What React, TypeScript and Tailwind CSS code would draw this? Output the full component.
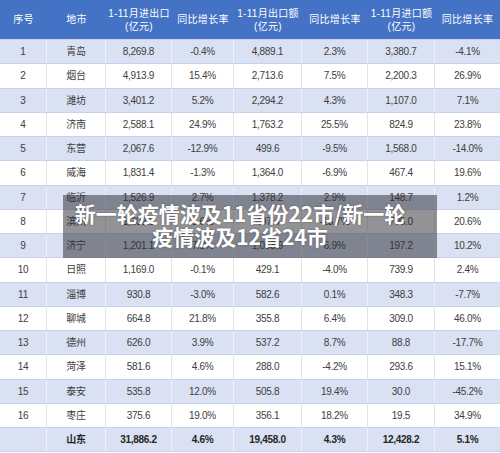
import React from "react";

type Row = [string, string, string, string, string, string, string, string];

const rows: Row[] = [
  ["1", "青岛", "8,269.8", "-0.4%", "4,889.1", "2.3%", "3,380.7", "-4.1%"],
  ["2", "烟台", "4,913.9", "15.4%", "2,713.6", "7.5%", "2,200.3", "26.9%"],
  ["3", "潍坊", "3,401.2", "5.2%", "2,294.2", "4.3%", "1,107.0", "7.1%"],
  ["4", "济南", "2,588.1", "24.9%", "1,763.2", "25.5%", "824.9", "23.8%"],
  ["5", "东营", "2,067.6", "-12.9%", "499.6", "-9.5%", "1,568.0", "-14.0%"],
  ["6", "威海", "1,831.4", "-1.3%", "1,364.0", "-6.9%", "467.4", "19.6%"],
  ["7", "临沂", "1,526.9", "2.7%", "1,378.2", "2.9%", "148.7", "1.2%"],
  ["8", "滨州", "1,202.5", "3.6%", "497.4", "-13.7%", "705.0", "20.6%"],
  ["9", "济宁", "1,201.1", "7.3%", "1,003.9", "6.9%", "197.2", "10.2%"],
  ["10", "日照", "1,169.0", "-0.1%", "429.1", "-4.0%", "739.9", "2.4%"],
  ["11", "淄博", "930.8", "-3.0%", "582.6", "0.1%", "348.3", "-7.7%"],
  ["12", "聊城", "664.8", "21.8%", "355.8", "6.4%", "309.0", "46.0%"],
  ["13", "德州", "626.0", "3.9%", "537.2", "8.7%", "88.8", "-17.7%"],
  ["14", "菏泽", "581.6", "4.6%", "288.0", "-4.2%", "293.6", "15.1%"],
  ["15", "泰安", "535.8", "12.0%", "505.8", "19.4%", "30.0", "-45.2%"],
  ["16", "枣庄", "375.6", "19.0%", "356.1", "18.2%", "19.5", "34.9%"],
];

const total: Row = ["", "山东", "31,886.2", "4.6%", "19,458.0", "4.3%", "12,428.2", "5.1%"];

const headers: [string, string?][] = [
  ["序号"],
  ["地市"],
  ["1-11月进出口", "(亿元)"],
  ["同比增长率"],
  ["1-11月出口额", "(亿元)"],
  ["同比增长率"],
  ["1-11月进口额", "(亿元)"],
  ["同比增长率"],
];

const grid = "grid grid-cols-[47px_59px_66px_62px_68px_66px_67px_65px]";

const font = {
  fontFamily: '"Liberation Sans", "Noto Sans CJK SC", Arial, sans-serif',
};

function DataRow({ r, idx, bold }: { r: Row; idx: number; bold?: boolean }) {
  const blue = idx % 2 === 0;
  return (
    <div
      className={`${grid} h-[24.25px] border-b border-[#c8d2ea] ${
        blue ? "bg-[#d9e1f2]" : "bg-white"
      }`}
    >
      {r.map((c, i) => (
        <div
          key={i}
          className={`flex items-center justify-center text-[10px] tracking-[-0.3px] ${
            bold ? "font-bold text-[#262626]" : "text-[#404040]"
          } ${i < 7 ? (blue ? "border-r border-[#eef1f8]" : "border-r border-[#e4e4e4]") : ""}`}
        >
          {c}
        </div>
      ))}
    </div>
  );
}

export default function App() {
  return (
    <div className="relative w-[500px] h-[453px] overflow-hidden bg-white" style={font}>
      <div className={`${grid} h-[40px] bg-[#4472c4] border-b border-[#c8d2ea]`}>
        {headers.map((h, i) => (
          <div
            key={i}
            className="flex flex-col items-center justify-center text-[10px] leading-[13px] text-white tracking-[0.3px]"
          >
            <span>{h[0]}</span>
            {h[1] && <span>{h[1]}</span>}
          </div>
        ))}
      </div>
      {rows.map((r, i) => (
        <DataRow key={i} r={r} idx={i} />
      ))}
      <DataRow r={total} idx={0} bold />

      <div className="absolute left-[63px] top-[195px] w-[374px] h-[63px] bg-[rgba(40,40,45,0.5)] flex flex-col items-center justify-center pr-[20px] pb-[4px]">
        <div
          className="text-white font-bold text-[21px] leading-[23px] text-center whitespace-nowrap"
          style={{ fontFamily: '"Noto Sans CJK SC", "Noto Sans", sans-serif', textShadow: "0 0 2px rgba(0,0,0,0.4)" }}
        >
          新一轮疫情波及11省份22市/新一轮
          <br />
          疫情波及12省24市
        </div>
      </div>
    </div>
  );
}
